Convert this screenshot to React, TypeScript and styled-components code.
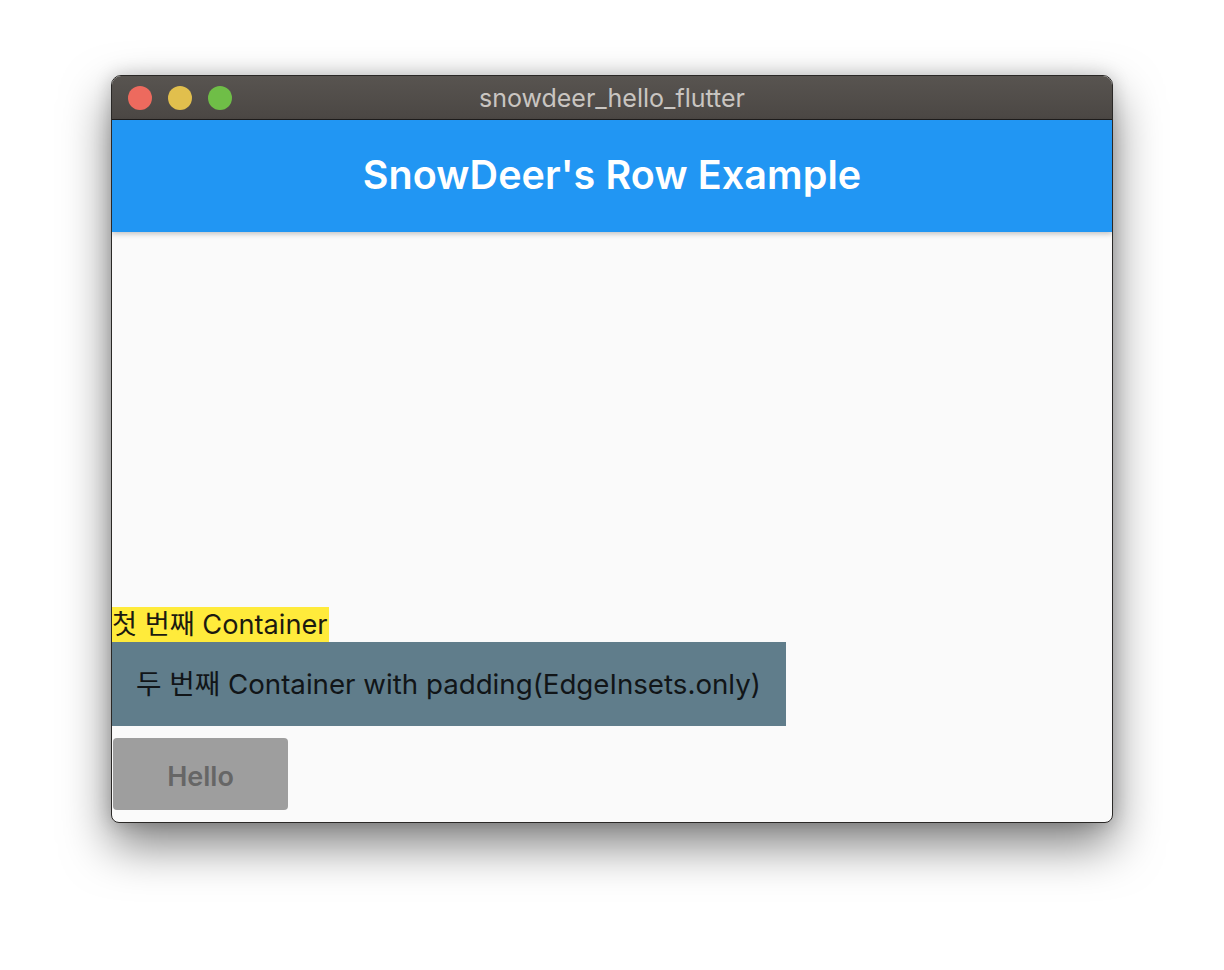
import React from "react";
import styled, { createGlobalStyle } from "styled-components";

const GlobalStyle = createGlobalStyle`
  html, body {
    margin: 0;
    padding: 0;
    background: #ffffff;
  }
  body {
    font-family: Inter, "Noto Sans CJK KR", sans-serif;
  }
`;

const Page = styled.div`
  width: 1224px;
  height: 970px;
  padding-top: 75px;
  padding-left: 111px;
  box-sizing: border-box;
`;

const Window = styled.div`
  width: 1002px;
  height: 748px;
  box-sizing: border-box;
  border: 1px solid #2a2826;
  border-radius: 10px 10px 8px 8px;
  overflow: hidden;
  display: flex;
  flex-direction: column;
  background: #fafafa;
  box-shadow: 0 22px 48px rgba(0, 0, 0, 0.5), 0 0 18px rgba(0, 0, 0, 0.18);
`;

const TitleBar = styled.div`
  height: 43px;
  flex-shrink: 0;
  position: relative;
  display: flex;
  align-items: center;
  justify-content: center;
  background: linear-gradient(#585450, #4b4744);
  border-bottom: 1px solid #1f1d1c;
`;

const Lights = styled.div`
  position: absolute;
  left: 16px;
  top: 10px;
  display: flex;
  gap: 16px;
`;

const Light = styled.span<{ $color: string }>`
  width: 24px;
  height: 24px;
  border-radius: 50%;
  background: ${({ $color }) => $color};
`;

const WindowTitle = styled.div`
  color: #c9c5c1;
  font-size: 25px;
`;

const AppBar = styled.div`
  height: 112px;
  flex-shrink: 0;
  background: #2196f3;
  display: flex;
  align-items: center;
  justify-content: center;
  box-shadow: 0 2px 5px rgba(0, 0, 0, 0.22);
  position: relative;
  z-index: 1;
`;

const AppTitle = styled.h1`
  margin: 0;
  color: #ffffff;
  font-size: 39.5px;
  font-weight: 600;
  letter-spacing: 0.1px;
  padding-bottom: 2px;
`;

const Body = styled.div`
  flex: 1;
  display: flex;
  flex-direction: column;
  justify-content: flex-end;
  align-items: flex-start;
  padding-bottom: 12px;
`;

const YellowBox = styled.div`
  background: #ffeb3b;
  color: #1c1a10;
  font-size: 27.2px;
  line-height: 35px;
  padding-right: 1px;
`;

const GreyBox = styled.div`
  background: #607d8b;
  color: #111518;
  font-size: 27.7px;
  line-height: 36px;
  width: 674px;
  box-sizing: border-box;
  padding: 24px;
`;

const HelloButton = styled.button`
  margin-top: 12px;
  margin-left: 1px;
  width: 175px;
  height: 72px;
  border: none;
  border-radius: 4px;
  background: #9e9e9e;
  color: #666666;
  font-family: Inter, "Noto Sans CJK KR", sans-serif;
  font-size: 27px;
  font-weight: 600;
  padding: 4px 0 0 0;
`;

export default function App() {
  return (
    <>
      <GlobalStyle />
      <Page>
        <Window>
          <TitleBar>
            <Lights>
              <Light $color="#ed6a5e" />
              <Light $color="#e1bf4d" />
              <Light $color="#6fbe47" />
            </Lights>
            <WindowTitle>snowdeer_hello_flutter</WindowTitle>
          </TitleBar>
          <AppBar>
            <AppTitle>SnowDeer's Row Example</AppTitle>
          </AppBar>
          <Body>
            <YellowBox>첫 번째 Container</YellowBox>
            <GreyBox>두 번째 Container with padding(EdgeInsets.only)</GreyBox>
            <HelloButton>Hello</HelloButton>
          </Body>
        </Window>
      </Page>
    </>
  );
}
